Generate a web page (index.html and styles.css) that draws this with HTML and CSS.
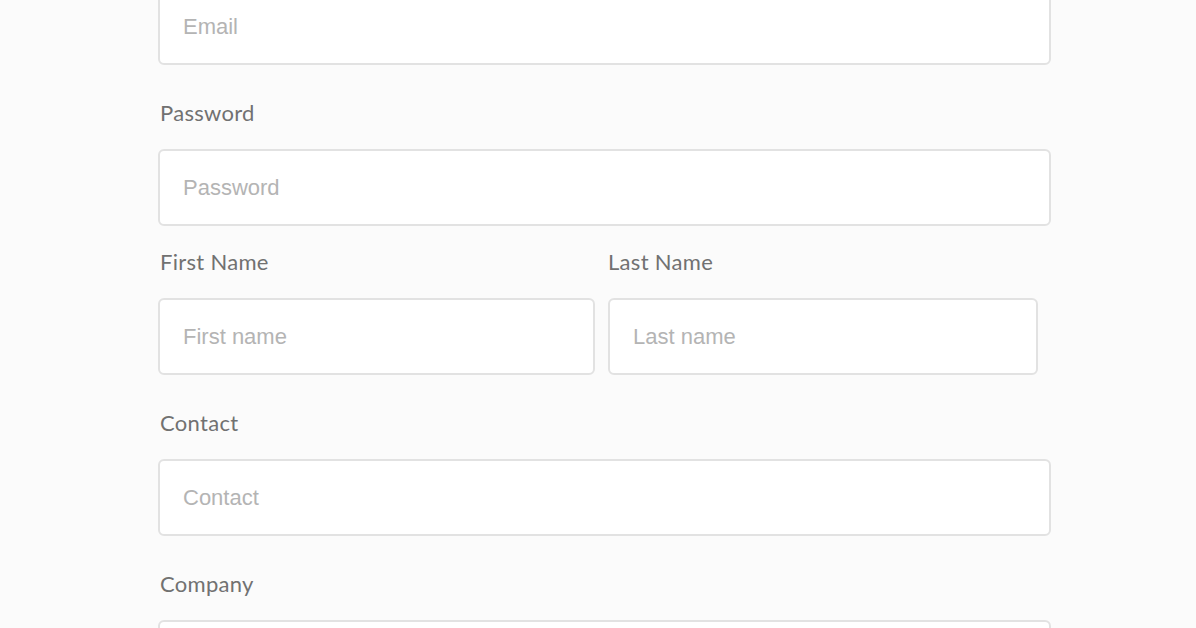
FILE: index.html
```html
<!DOCTYPE html>
<html lang="en">
<head>
<meta charset="utf-8">
<title>Sign up</title>
<link rel="stylesheet" href="styles.css">
</head>
<body>
<form class="form">
  <div class="group">
    <input class="field" type="email" placeholder="Email">
  </div>
  <div class="group group-tight">
    <label class="label">Password</label>
    <input class="field" type="password" placeholder="Password">
  </div>
  <div class="row">
    <div class="group col-first">
      <label class="label">First Name</label>
      <input class="field" type="text" placeholder="First name">
    </div>
    <div class="group col-last">
      <label class="label">Last Name</label>
      <input class="field" type="text" placeholder="Last name">
    </div>
  </div>
  <div class="group">
    <label class="label">Contact</label>
    <input class="field" type="text" placeholder="Contact">
  </div>
  <div class="group">
    <label class="label">Company</label>
    <input class="field" type="text" placeholder="Company">
  </div>
</form>
</body>
</html>
```

FILE: styles.css
```css
html, body {
  margin: 0;
  padding: 0;
  background: #fbfbfb;
  overflow: hidden;
}
.form {
  width: 893px;
  margin: -12px 0 0 158px;
  font-family: "Liberation Sans", Arial, sans-serif;
}
.group {
  display: flex;
  flex-direction: column;
  margin-bottom: 36px;
}
.group-tight {
  margin-bottom: 24px;
}
.label {
  font-family: Lato, "Liberation Sans", sans-serif;
  font-size: 22px;
  line-height: 24px;
  height: 24px;
  letter-spacing: 0.3px;
  color: #717171;
  margin: 0 0 24px 2px;
}
.field {
  box-sizing: border-box;
  height: 77px;
  width: 100%;
  border: 2px solid #e2e2e2;
  border-radius: 6px;
  background: #ffffff;
  padding: 0 23px;
  font-family: "Liberation Sans", Arial, sans-serif;
  font-size: 22px;
  color: #555;
  outline: none;
}
.field::placeholder {
  color: #b4b4b4;
}
.row {
  display: flex;
  gap: 13px;
}
.col-first {
  width: 437px;
}
.col-last {
  width: 430px;
}
.col-last .label {
  margin-left: 0;
}
```
